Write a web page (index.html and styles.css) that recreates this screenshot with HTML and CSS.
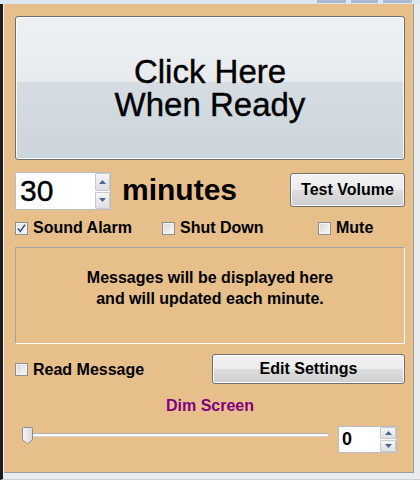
FILE: index.html
```html
<!DOCTYPE html>
<html>
<head>
<meta charset="utf-8">
<link rel="stylesheet" href="styles.css">
</head>
<body>
<div class="window">
  <div class="titlebar"><span class="tb tb1"></span><span class="tb tb2"></span><span class="tb tb3"></span></div>
  <div class="frame">
    <div class="content">
      <div class="ready"><span>Click Here<br>When Ready</span></div>

      <div class="row timer">
        <div class="spin spin-lg">
          <span class="val">30</span>
          <div class="arrows">
            <span class="arr"><svg width="7" height="4" viewBox="0 0 7 4"><path d="M0 4 L3.5 0 L7 4 Z" fill="#4d6592"/></svg></span>
            <span class="arr"><svg width="7" height="4" viewBox="0 0 7 4"><path d="M0 0 L7 0 L3.5 4 Z" fill="#4d6592"/></svg></span>
          </div>
        </div>
        <span class="minutes">minutes</span>
        <div class="btn test">Test Volume</div>
      </div>

      <div class="row checks">
        <label class="chk c1"><span class="box checked"><svg width="11" height="11" viewBox="0 0 11 11"><path d="M2 5.5 L4.3 8.5 L9 1.8" fill="none" stroke="#3b5590" stroke-width="1.6"/></svg></span>Sound Alarm</label>
        <label class="chk c2"><span class="box"></span>Shut Down</label>
        <label class="chk c3"><span class="box"></span>Mute</label>
      </div>

      <div class="messages">Messages will be displayed here<br>and will updated each minute.</div>

      <div class="row readrow">
        <label class="chk"><span class="box"></span>Read Message</label>
        <div class="btn edit">Edit Settings</div>
      </div>

      <div class="dim">Dim Screen</div>

      <div class="row sliderrow">
        <div class="slider">
          <div class="track"></div>
          <div class="ticks"><span class="tick"></span><span class="tick"></span></div>
          <svg class="thumb" width="11" height="18" viewBox="0 0 11 18">
            <defs><linearGradient id="tg" x1="0" y1="0" x2="1" y2="0"><stop offset="0" stop-color="#f4f4f4"/><stop offset="1" stop-color="#d9d9d9"/></linearGradient></defs>
            <path d="M1.5 0.5 H9.5 Q10.5 0.5 10.5 1.5 V12.5 L5.5 17 L0.5 12.5 V1.5 Q0.5 0.5 1.5 0.5 Z" fill="url(#tg)" stroke="#8c8c8c"/>
          </svg>
        </div>
        <div class="spin spin-sm">
          <span class="val">0</span>
          <div class="arrows">
            <span class="arr"><svg width="7" height="4" viewBox="0 0 7 4"><path d="M0 4 L3.5 0 L7 4 Z" fill="#4d6592"/></svg></span>
            <span class="arr"><svg width="7" height="4" viewBox="0 0 7 4"><path d="M0 0 L7 0 L3.5 4 Z" fill="#4d6592"/></svg></span>
          </div>
        </div>
      </div>
    </div>
  </div>
</div>
</body>
</html>
```

FILE: styles.css
```css
html, body {
  margin: 0;
  padding: 0;
}
body {
  width: 420px;
  height: 480px;
  overflow: hidden;
  font-family: "Liberation Sans", Arial, sans-serif;
  color: #000;
}
.window {
  width: 420px;
  height: 480px;
  display: flex;
  flex-direction: column;
  background: #e9ecef;
}
.titlebar {
  height: 4px;
  background: #dde7f0;
  display: flex;
  justify-content: flex-end;
  padding-right: 8px;
  gap: 5px;
}
.tb {
  height: 3px;
  background: #a9bbd3;
}
.tb1 { width: 29px; }
.tb2 { width: 27px; }
.tb3 { width: 29px; }
.frame {
  flex: 1;
  display: flex;
  border-left: 3px solid #1c1c1c;
  border-bottom: 1px solid #cfcfcf;
  padding-bottom: 6px;
  padding-right: 6px;
}
.content {
  flex: 1;
  background: #e6bf8b;
  box-shadow: inset 1px 0 0 #f3f3f3, inset -1px -1px 0 #9c9c9c;
  padding: 12px 9px 0 12px;
  display: flex;
  flex-direction: column;
}
.ready {
  height: 144px;
  box-sizing: border-box;
  border: 1px solid #707070;
  border-radius: 3px;
  box-shadow: inset 0 0 0 1px #fbfbfb;
  background: linear-gradient(#eef1f3 0%, #e7ebee 46%, #d5dde2 46%, #cbd5da 100%);
  display: flex;
  align-items: center;
  justify-content: center;
  text-align: center;
  font-size: 33px;
  line-height: 33px;
  -webkit-text-stroke: 0.4px #000;
}
.row {
  display: flex;
  align-items: center;
}
.timer {
  margin-top: 12px;
  height: 38px;
}
.spin {
  box-sizing: border-box;
  background: #fff;
  border: 1px solid #b9bdc5;
  display: flex;
  align-items: stretch;
}
.spin .val {
  flex: 1;
  display: flex;
  align-items: center;
}
.spin-lg {
  width: 96px;
  height: 38px;
}
.spin-lg .val {
  font-size: 30px;
  padding-left: 4px;
  -webkit-text-stroke: 0.4px #000;
}
.arrows {
  display: flex;
  flex-direction: column;
  gap: 1px;
  background: #fff;
}
.arr {
  flex: 1;
  display: flex;
  align-items: center;
  justify-content: center;
  box-sizing: border-box;
  border: 1px solid #c7cacf;
  border-radius: 1px;
  background: linear-gradient(#f6f6f6, #dcdfe3);
}
.spin-lg .arrows { width: 15px; }
.minutes {
  margin-left: 11px;
  font-size: 30px;
  font-weight: bold;
  margin-top: -2px;
}
.btn {
  box-sizing: border-box;
  border: 1px solid #707070;
  border-radius: 3px;
  box-shadow: inset 0 0 0 1px #fcfcfc;
  background: linear-gradient(#f3f3f3 0%, #ebebeb 50%, #dddddd 50%, #cfcfcf 100%);
  display: flex;
  align-items: center;
  justify-content: center;
  font-size: 16px;
  font-weight: bold;
}
.test {
  margin-left: auto;
  width: 115px;
  height: 34px;
  margin-top: -3px;
}
.checks {
  margin-top: 10px;
  height: 16px;
}
.chk {
  display: flex;
  align-items: center;
  font-size: 16px;
  font-weight: bold;
  white-space: nowrap;
}
.c1 { width: 147px; }
.c2 { width: 156px; }
.box {
  width: 13px;
  height: 13px;
  box-sizing: border-box;
  border: 1px solid #8e8f8f;
  background: linear-gradient(135deg, #d6d6d6, #fbfbfb);
  box-shadow: inset 0 0 0 1px #f2f2f2;
  margin-right: 5px;
  display: flex;
  align-items: center;
  justify-content: center;
}
.box.checked {
  background: linear-gradient(135deg, #e2e2e2, #fdfdfd);
}
.messages {
  margin-top: 11px;
  height: 97px;
  box-sizing: border-box;
  border-style: solid;
  border-width: 1px;
  border-color: #a3a3a3 #fbfbfb #fbfbfb #a3a3a3;
  text-align: center;
  font-size: 16px;
  font-weight: bold;
  line-height: 21px;
  padding-top: 19px;
}
.readrow {
  margin-top: 10px;
  height: 30px;
}
.readrow .chk {
  margin-top: 1px;
}
.edit {
  margin-left: auto;
  width: 193px;
  height: 30px;
}
.dim {
  margin-top: 12px;
  text-align: center;
  color: #800080;
  font-size: 16px;
  font-weight: bold;
  line-height: 20px;
}
.sliderrow {
  margin-top: 9px;
  height: 27px;
  align-items: flex-start;
}
.slider {
  position: relative;
  width: 307px;
  height: 27px;
  margin-left: 6px;
  display: flex;
  flex-direction: column;
}
.track {
  margin-top: 8px;
  margin-left: 3px;
  height: 4px;
  box-sizing: border-box;
  border-top: 1px solid #b1b1b1;
  border-bottom: 1px solid #d6d6d6;
  background: #fbfbfb;
}
.ticks {
  display: flex;
  justify-content: space-between;
  margin-top: 11px;
  padding: 0 4px 0 6px;
}
.tick {
  width: 1px;
  height: 2px;
  background: #b5b5b5;
}
.thumb {
  position: absolute;
  left: 1px;
  top: 2px;
}
.spin-sm {
  margin-left: auto;
  width: 59px;
  height: 27px;
  margin-right: 8px;
  margin-top: 1px;
}
.spin-sm .val {
  font-size: 18px;
  font-weight: bold;
  padding-left: 3px;
}
.spin-sm .arrows { width: 16px; }
```
